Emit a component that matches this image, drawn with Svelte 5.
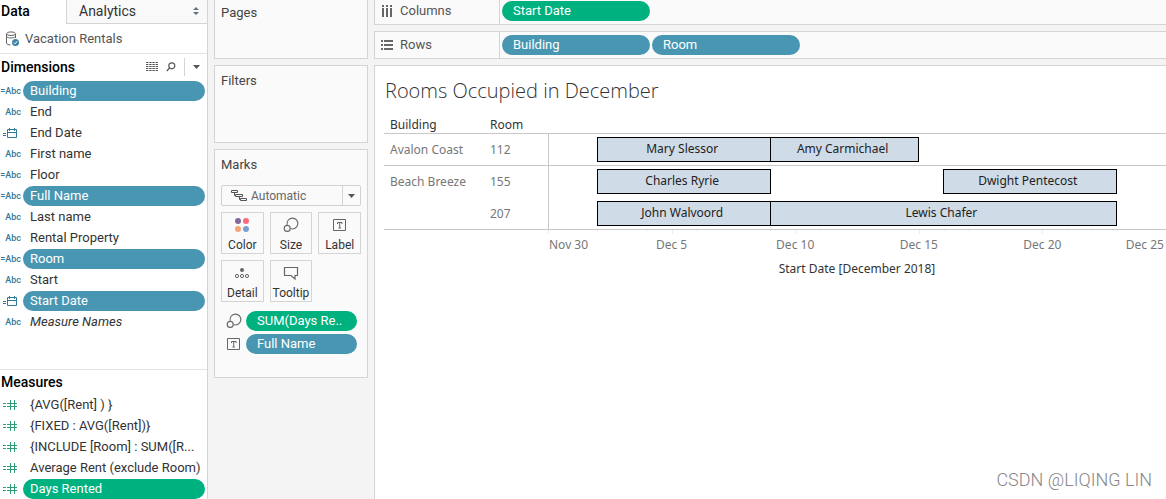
<script lang="ts">
	type Field = { name: string; icon: string; calc?: boolean; used?: boolean; italic?: boolean };
	type Stay = { guest: string; from: number; to: number };

	const dimensions: Field[] = [
		{ name: 'Building', icon: 'abc', calc: true, used: true },
		{ name: 'End', icon: 'abc' },
		{ name: 'End Date', icon: 'date' },
		{ name: 'First name', icon: 'abc' },
		{ name: 'Floor', icon: 'abc', calc: true },
		{ name: 'Full Name', icon: 'abc', calc: true, used: true },
		{ name: 'Last name', icon: 'abc' },
		{ name: 'Rental Property', icon: 'abc' },
		{ name: 'Room', icon: 'abc', calc: true, used: true },
		{ name: 'Start', icon: 'abc' },
		{ name: 'Start Date', icon: 'date', used: true },
		{ name: 'Measure Names', icon: 'abc', italic: true }
	];

	const measures: Field[] = [
		{ name: '{AVG([Rent] ) }', icon: 'number' },
		{ name: '{FIXED : AVG([Rent])}', icon: 'number' },
		{ name: '{INCLUDE [Room] : SUM([R...', icon: 'number' },
		{ name: 'Average Rent (exclude Room)', icon: 'number' },
		{ name: 'Days Rented', icon: 'number', used: true }
	];

	const markButtons = ['Color', 'Size', 'Label', 'Detail', 'Tooltip'];

	// from / to are days counted from Nov 30
	const rooms: { building?: string; span?: number; room: string; last?: boolean; stays: Stay[] }[] = [
		{
			building: 'Avalon Coast',
			span: 1,
			room: '112',
			last: true,
			stays: [
				{ guest: 'Mary Slessor', from: 2, to: 9 },
				{ guest: 'Amy Carmichael', from: 9, to: 15 }
			]
		},
		{
			building: 'Beach Breeze',
			span: 2,
			room: '155',
			stays: [
				{ guest: 'Charles Ryrie', from: 2, to: 9 },
				{ guest: 'Dwight Pentecost', from: 16, to: 23 }
			]
		},
		{
			room: '207',
			last: true,
			stays: [
				{ guest: 'John Walvoord', from: 2, to: 9 },
				{ guest: 'Lewis Chafer', from: 9, to: 23 }
			]
		}
	];

	const days = Array.from({ length: 25 }, (_, i) => i);
	const middleLabels = ['Dec 5', 'Dec 10', 'Dec 15', 'Dec 20'];

	let mark = $state('Automatic');
</script>

{#snippet fieldIcon(field: Field)}
	{#if field.icon === 'abc'}
		<span class="abc">{field.calc ? '=' : ''}Abc</span>
	{:else if field.icon === 'date'}
		<svg class="type-icon" width="16" height="12" viewBox="0 0 16 12" fill="none" stroke="currentColor">
			<path d="M1 6.5h3M1 8.5h3M5.5 2.5h9v8h-9zM5.5 5.5h9M7.5 1v3M12.5 1v3" />
		</svg>
	{:else}
		<svg class="type-icon" width="16" height="12" viewBox="0 0 16 12" fill="none" stroke="currentColor">
			<path d="M1 4.5h3M1 7.5h3M5 4.5h10M5 7.5h10M8.5 1v10M12.5 1v10" />
		</svg>
	{/if}
{/snippet}

{#snippet sizeIcon()}
	<svg width="16" height="16" viewBox="0 0 16 16" fill="none" stroke="#666" stroke-width="1.1">
		<path d="M4.2 7.8A5.4 5.4 0 1 1 7.400 11.500" />
		<circle cx="4.200" cy="11.400" r="3" />
	</svg>
{/snippet}

{#snippet labelIcon()}
	<svg width="14" height="14" viewBox="0 0 14 14" fill="none" stroke="#666">
		<path d="M.5 1.5h12v11H.5zM4.5 6V4.5h4.5V6M6.7 4.5v5.5M5.5 10h2.5" />
	</svg>
{/snippet}

{#snippet fieldList(fields: Field[], kind: string)}
	<ul class="fields {kind}">
		{#each fields as field}
			<li>
				<span class="type">{@render fieldIcon(field)}</span>
				<button class="pill" class:used={field.used} class:italic={field.italic}>{field.name}</button>
			</li>
		{/each}
	</ul>
{/snippet}

<div class="workspace">
	<aside class="data-pane">
		<div class="tabs">
			<button class="tab active">Data</button>
			<button class="tab">
				Analytics
				<svg width="6" height="8" viewBox="0 0 6 8" fill="#667080"><path d="M3 0l3 3H0zM3 8l3-3H0z" /></svg>
			</button>
		</div>
		<button class="source">
			<svg width="15" height="16" viewBox="0 0 15 16" fill="none" stroke="#666">
				<path d="M1.5 3v9c0 1 2 2 4 2M10.5 3v4" />
				<ellipse cx="6" cy="2.7" rx="4.5" ry="1.8" />
				<path d="M1.5 5.5c1.5 2 7.500 2 9 0" />
				<circle cx="10.5" cy="11.5" r="3.5" fill="#3d84a8" stroke="none" />
				<path d="M8.8 11.5l1.3 1.3 2.2-2.6" stroke="#fff" />
			</svg>
			Vacation Rentals
		</button>
		<section class="dimensions">
			<header>
				<h2>Dimensions</h2>
				<button class="tool" aria-label="View data">
					<svg width="12" height="9" viewBox="0 0 12 9" stroke="#555" fill="none">
						<path d="M0 .5h12M0 2.5h12M0 4.5h12M0 6.5h12M0 8.5h12" stroke-dasharray="2.4 .8" />
					</svg>
				</button>
				<button class="tool" aria-label="Find field">
					<svg width="10" height="10" viewBox="0 0 10 10" stroke="#555" fill="none" stroke-width="1.2">
						<circle cx="5.8" cy="3.8" r="3" />
						<path d="M3.6 6L.8 9" />
					</svg>
				</button>
				<button class="tool menu" aria-label="Dimensions menu">
					<svg width="7" height="4" viewBox="0 0 7 4" fill="#555"><path d="M0 0h7L3.5 4z" /></svg>
				</button>
			</header>
			{@render fieldList(dimensions, 'blue')}
		</section>
		<section class="measures">
			<header><h2>Measures</h2></header>
			{@render fieldList(measures, 'green')}
		</section>
	</aside>

	<div class="cards">
		<section class="card pages"><h3>Pages</h3></section>
		<section class="card filters"><h3>Filters</h3></section>
		<section class="card marks">
			<h3>Marks</h3>
			<label class="mark-type">
				<svg width="17" height="12" viewBox="0 0 17 12" fill="none" stroke="#555">
					<path d="M.5.5h6v2h-6zM4.5 4.5h7v2h-7zM9.5 8.5h6v2h-6zM3.5 2.5v3h1M8.5 6.5v3h1" />
				</svg>
				<select bind:value={mark} aria-label="Mark type">
					<option>Automatic</option>
					<option>Bar</option>
					<option>Line</option>
				</select>
				<span class="arrow">
					<svg width="7" height="4" viewBox="0 0 7 4" fill="#555"><path d="M0 0h7L3.5 4z" /></svg>
				</span>
			</label>
			<div class="mark-buttons">
				{#each markButtons as name}
					<button>
						<span class="glyph">
							{#if name === 'Color'}
								<svg width="16" height="16" viewBox="0 0 16 16">
									<circle cx="4" cy="4" r="3" fill="#85699a" />
									<circle cx="12" cy="4" r="3" fill="#fb6a7c" />
									<circle cx="4" cy="12" r="3" fill="#f5a476" />
									<circle cx="12" cy="12" r="3" fill="#7b9fcb" />
								</svg>
							{:else if name === 'Size'}
								{@render sizeIcon()}
							{:else if name === 'Label'}
								{@render labelIcon()}
							{:else if name === 'Detail'}
								<svg width="16" height="12" viewBox="0 0 16 12" fill="none" stroke="#666">
									<circle cx="8" cy="3" r="2" fill="#666" stroke="none" />
									<circle cx="3" cy="9" r="1.6" />
									<circle cx="8" cy="9" r="1.6" />
									<circle cx="13" cy="9" r="1.6" />
								</svg>
							{:else}
								<svg width="16" height="14" viewBox="0 0 16 14" fill="none" stroke="#666" stroke-width="1.2">
									<path d="M1.5 1.5h13v8h-2.5v3.5l-4-3.5h-6.5z" />
								</svg>
							{/if}
						</span>
						{name}
					</button>
				{/each}
			</div>
			<ul class="encodings">
				<li>
					<span class="glyph">{@render sizeIcon()}</span>
					<button class="pill used green">SUM(Days Re..</button>
				</li>
				<li>
					<span class="glyph">{@render labelIcon()}</span>
					<button class="pill used">Full Name</button>
				</li>
			</ul>
		</section>
	</div>

	<main>
		<div class="shelf columns">
			<div class="shelf-name">
				<svg width="12" height="12" viewBox="0 0 12 12" fill="#666">
					<path d="M1 0h2v2H1zM5 0h2v2H5zM9 0h2v2H9zM1 3h2v9H1zM5 3h2v9H5zM9 3h2v9H9z" />
				</svg>
				Columns
			</div>
			<button class="pill used green">Start Date</button>
		</div>
		<div class="shelf">
			<div class="shelf-name">
				<svg width="12" height="12" viewBox="0 0 12 12" fill="#666">
					<path d="M0 1h2v2H0zM0 5h2v2H0zM0 9h2v2H0zM3 1h9v2H3zM3 5h9v2H3zM3 9h9v2H3z" />
				</svg>
				Rows
			</div>
			<button class="pill used">Building</button>
			<button class="pill used">Room</button>
		</div>
		<section class="view">
			<h1>Rooms Occupied in December</h1>
			<table>
				<colgroup>
					<col class="building-col" />
					<col class="room-col" />
					<col />
				</colgroup>
				<thead>
					<tr>
						<th>Building</th>
						<th>Room</th>
						<th></th>
					</tr>
				</thead>
				<tbody>
					{#each rooms as row}
						<tr class:last={row.last}>
							{#if row.building}
								<td class="building" rowspan={row.span}>{row.building}</td>
							{/if}
							<td class="room">{row.room}</td>
							<td class="plot">
								<div class="timeline">
									{#each row.stays as stay}
										<span class="bar" style="grid-column: {stay.from + 1} / {stay.to + 1}">{stay.guest}</span>
									{/each}
								</div>
							</td>
						</tr>
					{/each}
				</tbody>
				<tfoot>
					<tr>
						<td colspan="2"></td>
						<td>
							<div class="ticks">
								{#each days as day}
									<i class:major={day % 5 === 0}></i>
								{/each}
							</div>
							<div class="axis">
								<span class="first">Nov 30</span>
								{#each middleLabels as label}
									<span class="middle">{label}</span>
								{/each}
								<span class="end">Dec 25</span>
							</div>
							<div class="axis-title">Start Date [December 2018]</div>
						</td>
					</tr>
				</tfoot>
			</table>
			<span class="watermark">CSDN @LIQING LIN</span>
		</section>
	</main>
</div>

<style>
	:global(body) {
		margin: 0;
	}

	.workspace {
		display: grid;
		grid-template-columns: 208px 154px 1fr;
		column-gap: 6px;
		min-height: 100vh;
		background: #f4f4f4;
		font-family: Roboto, 'Open Sans', sans-serif;
		font-size: 13px;
		line-height: 20px;
		color: #333;
	}

	h1,
	h2,
	h3,
	ul {
		margin: 0;
		padding: 0;
		list-style: none;
	}

	button,
	select {
		margin: 0;
		padding: 0;
		border: none;
		background: none;
		font: inherit;
		color: inherit;
		cursor: pointer;
	}

	svg {
		display: block;
		flex: none;
	}

	.pill {
		height: 20px;
		padding: 0 7px;
		border-radius: 10px;
		text-align: left;
		white-space: nowrap;
	}

	.pill.used {
		background: #4996b2;
		color: #fff;
	}

	.pill.italic {
		font-style: italic;
	}

	.pill.green,
	.green .pill.used {
		background: #00b180;
	}

	/* data pane */
	.data-pane {
		display: flex;
		flex-direction: column;
		border-right: 1px solid #d4d4d4;
		background: #fff;
	}

	.tabs {
		display: grid;
		grid-template-columns: 66px 1fr;
		height: 24px;
	}

	.tab {
		display: flex;
		align-items: center;
		justify-content: space-between;
		padding: 0 8px 2px 12px;
		border-left: 1px solid #d4d4d4;
		border-bottom: 1px solid #d4d4d4;
		background: #f9f9f9;
		font-size: 14px;
	}

	.tab.active {
		padding-left: 1px;
		border: none;
		background: #fff;
		font-weight: 500;
		color: #000;
	}

	.source {
		display: flex;
		align-items: center;
		gap: 5px;
		height: 30px;
		padding: 0 5px;
		border-bottom: 1px solid #e4e4e4;
		color: #555;
	}

	header {
		display: flex;
		align-items: center;
		box-sizing: border-box;
		height: 27px;
		padding-bottom: 2px;
	}

	h2 {
		flex: 1;
		padding-left: 1px;
		font-size: 14px;
		font-weight: 500;
		color: #000;
	}

	.tool {
		display: flex;
		align-items: center;
		height: 18px;
		padding-right: 8px;
	}

	.tool.menu {
		padding: 0 7px 0 8px;
		border-left: 1px solid #d4d4d4;
	}

	.dimensions {
		height: 315px;
	}

	.measures {
		border-top: 1px solid #e4e4e4;
	}

	.measures header {
		height: 25px;
	}

	.fields li {
		display: grid;
		grid-template-columns: 23px 1fr;
		align-items: center;
		height: 20px;
		margin-bottom: 1px;
		padding-right: 2px;
	}

	.fields li:last-child {
		margin-bottom: 0;
	}

	.type {
		display: flex;
		justify-content: flex-end;
		padding-right: 2px;
		color: #33799a;
	}

	.green .type {
		color: #2f9c76;
	}

	.type-icon {
		margin-right: 3px;
	}

	.abc {
		font-size: 9px;
		font-weight: 500;
	}

	/* cards */
	.cards {
		display: flex;
		flex-direction: column;
		gap: 6px;
	}

	.card {
		box-sizing: border-box;
		padding: 5px 6px;
		border: 1px solid #d4d4d4;
		background: #fafafa;
	}

	h3 {
		font-size: 13px;
		font-weight: 400;
		color: #444;
	}

	.pages {
		height: 59px;
		padding-top: 3px;
		border-top: none;
	}

	.filters {
		height: 78px;
	}

	.marks {
		height: 229px;
	}

	.mark-type {
		display: flex;
		align-items: center;
		box-sizing: border-box;
		height: 21px;
		margin-top: 10px;
		padding-left: 9px;
		border: 1px solid #d0d0d0;
		border-radius: 2px;
	}

	.mark-type select {
		flex: 1;
		min-width: 0;
		padding-left: 3px;
		appearance: none;
		font-size: 12px;
		color: #666;
	}

	.arrow {
		display: flex;
		align-items: center;
		align-self: stretch;
		padding: 0 5px;
		border-left: 1px solid #d4d4d4;
	}

	.mark-buttons {
		display: grid;
		grid-template-columns: repeat(3, 1fr);
		gap: 6px;
		margin: 6px 0 9px;
	}

	.mark-buttons button {
		display: flex;
		flex-direction: column;
		align-items: center;
		box-sizing: border-box;
		height: 42px;
		border: 1px solid #d4d4d4;
		font-size: 12px;
		line-height: 16px;
	}

	.glyph {
		display: flex;
		align-items: center;
		justify-content: center;
	}

	.mark-buttons .glyph {
		height: 25px;
	}

	.encodings li {
		display: grid;
		grid-template-columns: 25px 1fr;
		margin-bottom: 3px;
		padding-right: 4px;
	}

	.encodings .pill,
	.shelf .pill {
		padding-left: 11px;
	}

	/* shelves */
	main {
		display: flex;
		flex-direction: column;
		gap: 6px;
		min-width: 0;
	}

	.shelf {
		display: flex;
		align-items: center;
		gap: 2px;
		box-sizing: border-box;
		height: 28px;
		border: 1px solid #d4d4d4;
		border-right: none;
		background: #fafafa;
	}

	.shelf.columns {
		height: 25px;
		padding-bottom: 2px;
		border-top: none;
	}

	.shelf-name {
		display: flex;
		align-items: center;
		gap: 7px;
		box-sizing: border-box;
		width: 125px;
		height: 26px;
		padding-left: 6px;
		border-right: 1px solid #d4d4d4;
		color: #555;
	}

	.shelf .pill {
		width: 148px;
	}

	/* view */
	.view {
		position: relative;
		flex: 1;
		padding: 11px 0 0 9px;
		border: 1px solid #d4d4d4;
		border-width: 1px 0 0 1px;
		background: #fff;
		font-family: 'Noto Sans', 'Open Sans', sans-serif;
		font-size: 12px;
	}

	h1 {
		padding-left: 1px;
		font-family: 'Open Sans', sans-serif;
		font-size: 20px;
		font-weight: 300;
		line-height: 28px;
	}

	table {
		width: 100%;
		margin-top: 11px;
		border-spacing: 0;
		table-layout: fixed;
	}

	.building-col {
		width: 100px;
	}

	.room-col {
		width: 64px;
	}

	th,
	td {
		padding: 0;
		text-align: left;
		vertical-align: top;
	}

	th {
		height: 17px;
		padding-left: 6px;
		border-bottom: 1px solid #c8c8c8;
		font-weight: 400;
		line-height: 17px;
	}

	.building,
	.room {
		padding-left: 6px;
		line-height: 31px;
		color: #777;
	}

	.plot {
		height: 32px;
		border-left: 1px solid #c8c8c8;
	}

	.building,
	.last .room,
	.last .plot {
		border-bottom: 1px solid #c8c8c8;
	}

	.last .plot {
		height: 31px;
	}

	.timeline,
	.ticks {
		display: grid;
		grid-template-columns: repeat(25, minmax(0, 1fr));
	}

	.bar {
		height: 23px;
		margin: 3px 0 0 -1px;
		padding-right: 4px;
		border: 1px solid #000;
		background: #cfdbe6;
		text-align: center;
		line-height: 22px;
		color: #222;
		white-space: nowrap;
	}

	.ticks {
		height: 4px;
	}

	.ticks i {
		height: 1px;
		border-left: 1px solid #ececec;
	}

	.ticks .major {
		height: 4px;
	}

	.axis {
		display: grid;
		grid-template-columns: repeat(10, minmax(0, 1fr));
		padding-top: 1px;
		color: #777;
		white-space: nowrap;
	}

	.middle {
		grid-column: span 2;
		text-align: center;
	}

	.first {
		padding-left: 1px;
	}

	.end {
		padding-right: 2px;
		justify-self: end;
	}

	.axis-title {
		margin-top: 4px;
		text-align: center;
	}

	.watermark {
		position: absolute;
		right: 14px;
		bottom: 9px;
		font-weight: 300;
		font-size: 18px;
		font-family: Roboto, sans-serif;
		color: #888;
	}
</style>
